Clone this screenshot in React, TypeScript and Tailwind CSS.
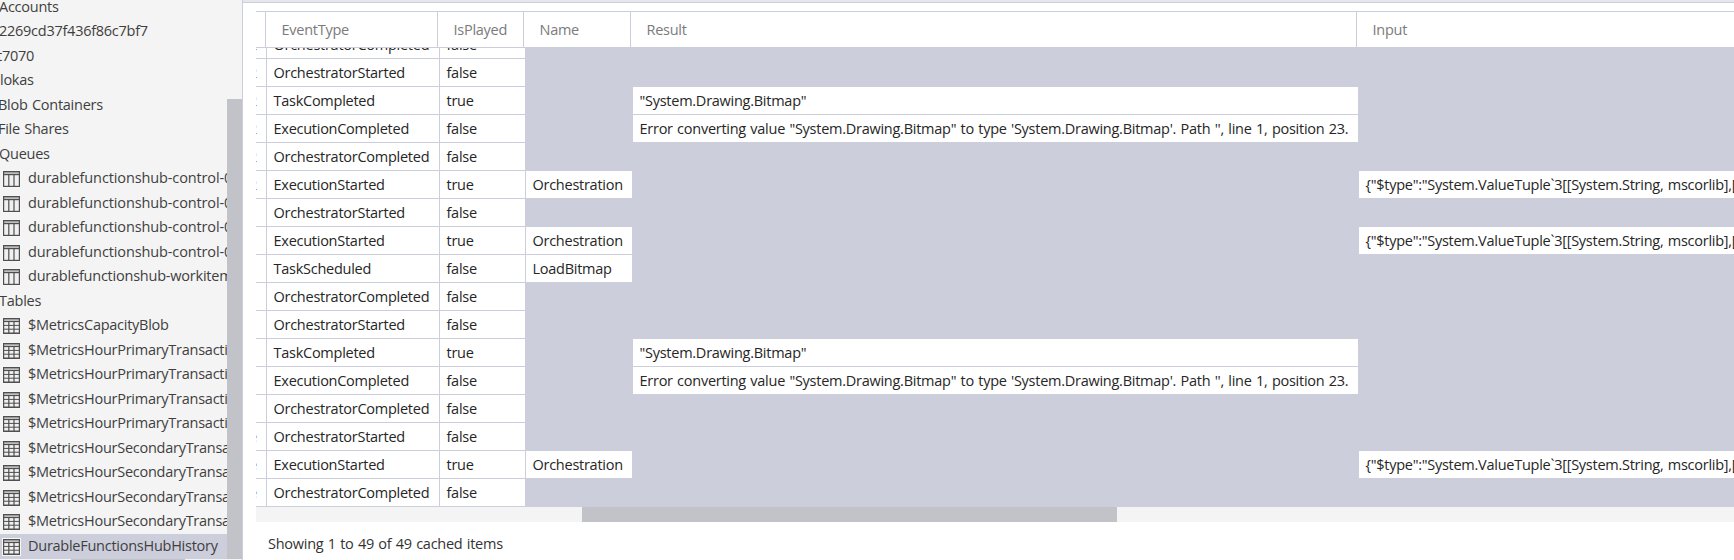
import React from "react";

type TreeItem = { label: string; kind?: "queue" | "table"; indent?: string; selected?: boolean };

const tree: TreeItem[] = [
  { label: "Accounts" },
  { label: "2269cd37f436f86c7bf7" },
  { label: "t7070", indent: "-ml-[3px]" },
  { label: "lokas", indent: "ml-0" },
  { label: "Blob Containers", indent: "-ml-[2px]" },
  { label: "File Shares", indent: "-ml-[2px]" },
  { label: "Queues" },
  { label: "durablefunctionshub-control-00", kind: "queue", indent: "tracking-[-0.12px]" },
  { label: "durablefunctionshub-control-01", kind: "queue", indent: "tracking-[-0.12px]" },
  { label: "durablefunctionshub-control-02", kind: "queue", indent: "tracking-[-0.12px]" },
  { label: "durablefunctionshub-control-03", kind: "queue", indent: "tracking-[-0.12px]" },
  { label: "durablefunctionshub-workitems", kind: "queue", indent: "tracking-[-0.22px]" },
  { label: "Tables" },
  { label: "$MetricsCapacityBlob", kind: "table" },
  { label: "$MetricsHourPrimaryTransactionsBlob", kind: "table" },
  { label: "$MetricsHourPrimaryTransactionsFile", kind: "table" },
  { label: "$MetricsHourPrimaryTransactionsQueue", kind: "table" },
  { label: "$MetricsHourPrimaryTransactionsTable", kind: "table" },
  { label: "$MetricsHourSecondaryTransactionsBlob", kind: "table" },
  { label: "$MetricsHourSecondaryTransactionsFile", kind: "table" },
  { label: "$MetricsHourSecondaryTransactionsQueue", kind: "table" },
  { label: "$MetricsHourSecondaryTransactionsTable", kind: "table" },
  { label: "DurableFunctionsHubHistory", kind: "table", selected: true },
];

type Row = { mark: string; event: string; played: boolean; name?: string; result?: string; input?: string };

const bitmap = '"System.Drawing.Bitmap"';
const error =
  "Error converting value \"System.Drawing.Bitmap\" to type 'System.Drawing.Bitmap'. Path '', line 1, position 23.";
const tuple = '{"$type":"System.ValueTuple`3[[System.String, mscorlib],[System.String, mscorlib]]';

const rows: Row[] = [
  { mark: "2", event: "OrchestratorCompleted", played: false },
  { mark: "2", event: "OrchestratorStarted", played: false },
  { mark: "2", event: "TaskCompleted", played: true, result: bitmap },
  { mark: "2", event: "ExecutionCompleted", played: false, result: error },
  { mark: "2", event: "OrchestratorCompleted", played: false },
  { mark: "2", event: "ExecutionStarted", played: true, name: "Orchestration", input: tuple },
  { mark: "", event: "OrchestratorStarted", played: false },
  { mark: "", event: "ExecutionStarted", played: true, name: "Orchestration", input: tuple },
  { mark: "", event: "TaskScheduled", played: false, name: "LoadBitmap" },
  { mark: "", event: "OrchestratorCompleted", played: false },
  { mark: "", event: "OrchestratorStarted", played: false },
  { mark: "", event: "TaskCompleted", played: true, result: bitmap },
  { mark: "", event: "ExecutionCompleted", played: false, result: error },
  { mark: "", event: "OrchestratorCompleted", played: false },
  { mark: "e", event: "OrchestratorStarted", played: false },
  { mark: "e", event: "ExecutionStarted", played: true, name: "Orchestration", input: tuple },
  { mark: "e", event: "OrchestratorCompleted", played: false },
];

function TreeIcon({ kind }: { kind: "queue" | "table" }) {
  return (
    <svg width="19" height="18" viewBox="0 0 19 18" className="shrink-0">
      <rect width="19" height="18" fill="#f6f6f6" />
      <rect x="1" y="1" width="17" height="16" fill="#4f4f4f" />
      {kind === "queue" ? (
        <g fill="#f0eff1">
          <rect x="2.2" y="2.5" width="14.6" height="1.2" />
          <rect x="2.2" y="5.2" width="4" height="10.6" />
          <rect x="7.4" y="5.2" width="4" height="10.6" />
          <rect x="12.6" y="5.2" width="4.2" height="10.6" />
        </g>
      ) : (
        <g fill="#f0eff1">
          <rect x="2.2" y="2.5" width="14.6" height="1.2" />
          {[5.1, 8.9, 12.7].map((y) => (
            <React.Fragment key={y}>
              <rect x="2.2" y={y} width="4" height="2.8" />
              <rect x="7.4" y={y} width="4" height="2.8" />
              <rect x="12.6" y={y} width="4.2" height="2.8" />
            </React.Fragment>
          ))}
        </g>
      )}
    </svg>
  );
}

function Sidebar() {
  return (
    <aside className="flex h-full w-[243px] shrink-0 flex-col border-r border-[#cccedb] bg-[#f4f4f4] text-[#3f3f3f]">
      <div className="flex h-[559px] overflow-hidden">
        <div className="-mt-[5px] w-[227px] overflow-hidden">
          {tree.map((t) => (
            <div
              key={t.label}
              className={`flex h-[24.5px] items-center pb-px whitespace-nowrap ${t.selected ? "bg-[#cccedb]" : ""}`}
            >
              {t.kind ? (
                <span className="mr-[7px] ml-[2px] flex pt-[2px]">
                  <TreeIcon kind={t.kind} />
                </span>
              ) : null}
              <span className={t.indent ?? (t.kind ? "" : "-ml-px")}>{t.label}</span>
            </div>
          ))}
        </div>
        <div className="mt-[99px] w-[15px] bg-[#c2c3c9]" />
      </div>
      <div className="ml-[71px] h-px w-[114px] bg-[#c2c3c9]" />
    </aside>
  );
}

function HeaderCell({ width, children }: { width: string; children?: React.ReactNode }) {
  return (
    <div className={`flex h-full shrink-0 items-center border-r border-[#cccedb] pt-px ${width}`}>
      {children ? <span className="ml-[15.5px]">{children}</span> : null}
    </div>
  );
}

function Cell({ width, children }: { width: string; children?: React.ReactNode }) {
  return (
    <div
      className={`flex h-full shrink-0 items-center overflow-hidden border-r border-[#cccedb] pt-px pl-[6.5px] ${width} ${
        children ? "bg-white" : "bg-[#cccedb]"
      }`}
    >
      {children}
    </div>
  );
}

export default function App() {
  return (
    <div className="flex h-[560px] w-[1734px] overflow-hidden bg-white font-['Open_Sans','Noto_Sans',sans-serif] text-[14.5px] leading-[20px] font-normal tracking-[-0.26px] [word-spacing:0.85px]">
      <Sidebar />
      <main className="flex min-w-0 flex-1 flex-col">
        <div className="h-[3px] shrink-0 border-b border-[#cccedb] bg-[#e6e7ed]" />
        <div className="mt-2 ml-[13px] flex h-[37px] shrink-0 border-y border-[#cccedb] whitespace-nowrap text-[#7b7b7b]">
          <HeaderCell width="w-[10px]" />
          <HeaderCell width="w-[172px]">EventType</HeaderCell>
          <HeaderCell width="w-[86px]">IsPlayed</HeaderCell>
          <HeaderCell width="w-[107px]">Name</HeaderCell>
          <HeaderCell width="w-[726px]">Result</HeaderCell>
          <HeaderCell width="w-[400px]">Input</HeaderCell>
        </div>
        <div className="ml-[13px] flex h-[459px] shrink-0 flex-col justify-end overflow-hidden whitespace-nowrap text-[#262626]">
          {rows.map((r, i) => (
            <div key={i} className="flex h-7 shrink-0 border-b border-[#cccedb]">
              <div className="flex h-full w-[11px] shrink-0 items-center overflow-hidden border-r border-[#cccedb]">
                <span className="-ml-[7px] text-[#717171]">{r.mark}</span>
              </div>
              <Cell width="w-[173px]">{r.event}</Cell>
              <Cell width="w-[86px]">{String(r.played)}</Cell>
              <Cell width="w-[107px]">{r.name}</Cell>
              <Cell width="w-[726px]">{r.result}</Cell>
              <Cell width="w-[400px]">{r.input}</Cell>
            </div>
          ))}
        </div>
        <div className="ml-[13px] h-[15px] shrink-0 bg-[#f4f4f4]">
          <div className="ml-[326px] h-full w-[535px] bg-[#c2c3c9]" />
        </div>
        <div className="flex flex-1 items-center pt-[5px] pl-[25px] text-[#333333]">
          Showing 1 to 49 of 49 cached items
        </div>
      </main>
    </div>
  );
}
